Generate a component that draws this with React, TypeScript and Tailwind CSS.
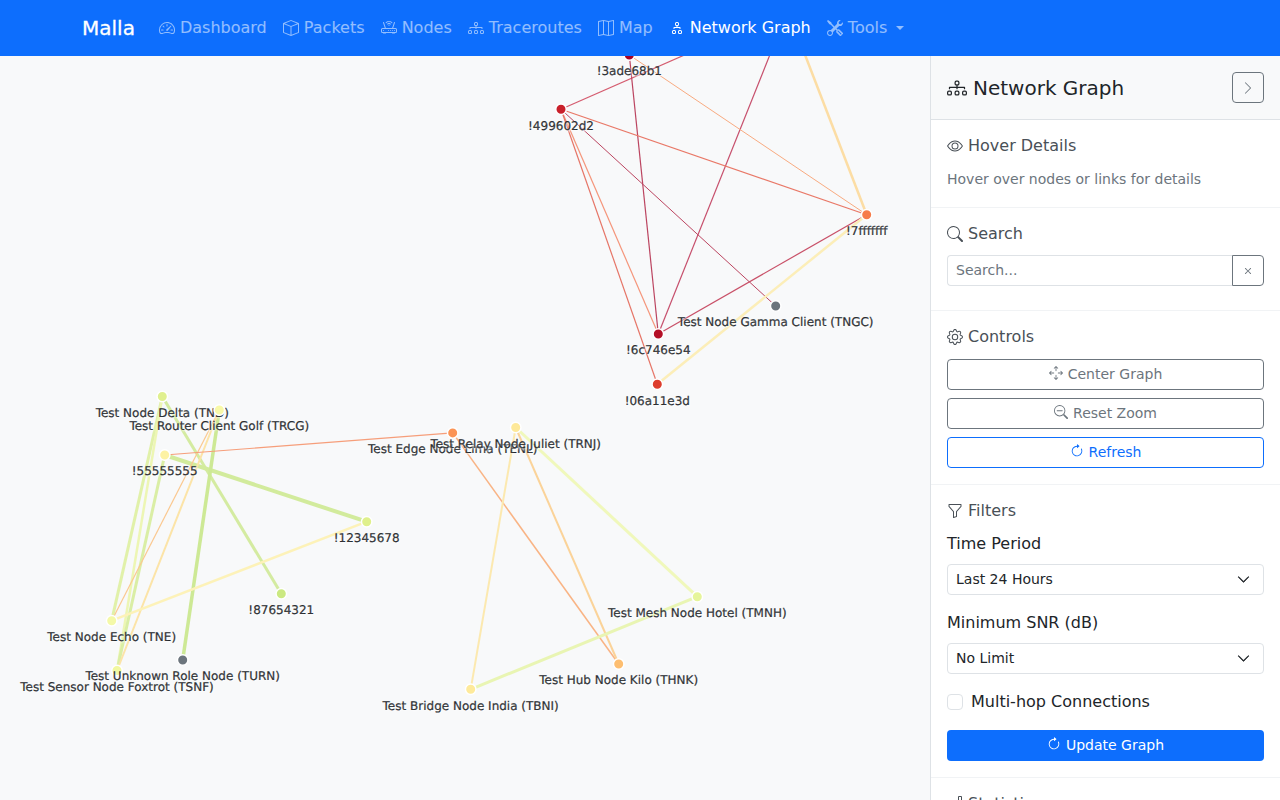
import React from 'react';
import {
  BsSpeedometer2,
  BsBox,
  BsRouter,
  BsDiagram2,
  BsDiagram3,
  BsMap,
  BsTools,
  BsEye,
  BsSearch,
  BsGear,
  BsArrowsMove,
  BsZoomOut,
  BsArrowClockwise,
  BsFunnel,
  BsChevronRight,
  BsChevronDown,
  BsX,
  BsBarChart,
} from 'react-icons/bs';

const nodes: Record<string, { x: number; y: number; color: string; label: string }> = {
  a: { x: 629.3, y: 55, color: '#a50026', label: '!3ade68b1' },
  b: { x: 561, y: 109.3, color: '#c9202a', label: '!499602d2' },
  c: { x: 866.7, y: 214.7, color: '#f67c4a', label: '!7fffffff' },
  d: { x: 658.3, y: 334, color: '#b40f26', label: '!6c746e54' },
  e: { x: 657.3, y: 384.3, color: '#dd3d2d', label: '!06a11e3d' },
  f: { x: 775.7, y: 306, color: '#6c757d', label: 'Test Node Gamma Client (TNGC)' },
  g: { x: 162.3, y: 396.5, color: '#e0f08f', label: 'Test Node Delta (TND)' },
  h: { x: 164.7, y: 455, color: '#fdf2a4', label: '!55555555' },
  i: { x: 366.7, y: 521.7, color: '#dff08c', label: '!12345678' },
  j: { x: 281.3, y: 593.7, color: '#cbe982', label: '!87654321' },
  k: { x: 111.7, y: 620.7, color: '#f4f9a8', label: 'Test Node Echo (TNE)' },
  l: { x: 117, y: 670.5, color: '#f2f8a0', label: 'Test Sensor Node Foxtrot (TSNF)' },
  m: { x: 182.7, y: 660, color: '#6c757d', label: 'Test Unknown Role Node (TURN)' },
  n: { x: 219.3, y: 410, color: '#f8f9a8', label: 'Test Router Client Golf (TRCG)' },
  o: { x: 452.7, y: 432.9, color: '#fb9455', label: 'Test Edge Node Lima (TENL)' },
  p: { x: 515.7, y: 427.5, color: '#fee999', label: 'Test Relay Node Juliet (TRNJ)' },
  q: { x: 697.3, y: 596.7, color: '#e6f59b', label: 'Test Mesh Node Hotel (TMNH)' },
  r: { x: 618.7, y: 664, color: '#fdbe70', label: 'Test Hub Node Kilo (THNK)' },
  s: { x: 470.7, y: 689.3, color: '#feea9b', label: 'Test Bridge Node India (TBNI)' },
};

const links: [string, string, string, number][] = [
  ['a', 'd', '#a50026', 1.2],
  ['a', 'c', '#f88d52', 1],
  ['b', 'c', '#e4472f', 1.2],
  ['b', 'd', '#f4704a', 1.2],
  ['b', 'e', '#e0432f', 1.2],
  ['b', 'f', '#a50026', 1],
  ['d', 'c', '#b71030', 1.2],
  ['e', 'c', '#feeaa0', 2.5],
  ['g', 'k', '#d9ef8b', 3],
  ['g', 'l', '#eaf59a', 2.5],
  ['h', 'l', '#cfeb85', 3],
  ['g', 'j', '#c7e77f', 3],
  ['h', 'i', '#c4e678', 4],
  ['n', 'm', '#bde36f', 3.5],
  ['n', 'k', '#fdb768', 1.2],
  ['n', 'l', '#fedc88', 2],
  ['h', 'o', '#f67c4a', 1.2],
  ['k', 'i', '#fff0a0', 2.5],
  ['o', 'r', '#fa9a58', 1.5],
  ['p', 'r', '#fdc574', 2],
  ['p', 's', '#fee393', 2],
  ['p', 'q', '#eef8a4', 3],
  ['q', 's', '#e4f498', 3],
];

// links whose far end sits behind the navbar
const clippedLinks: [number, number, number, number, string, number][] = [
  [561, 109.3, 689, 53, '#c8203a', 1.2],
  [658.3, 334, 773, 47, '#b40f36', 1.2],
  [866.7, 214.7, 802, 47, '#fed384', 2.5],
];

const navItems = [
  { label: 'Dashboard', icon: BsSpeedometer2 },
  { label: 'Packets', icon: BsBox },
  { label: 'Nodes', icon: BsRouter },
  { label: 'Traceroutes', icon: BsDiagram3 },
  { label: 'Map', icon: BsMap },
  { label: 'Network Graph', icon: BsDiagram2, active: true },
];

type IconType = React.ComponentType<{ size?: number; className?: string }>;

const SectionTitle = ({ icon: Icon, children, className = 'mb-3' }: { icon: IconType; children: React.ReactNode; className?: string }) => (
  <h6 className={`flex items-center text-base leading-[19.2px] font-normal text-[#495057] ${className}`}>
    <Icon size={16} className="mr-[5px] shrink-0" />
    {children}
  </h6>
);

const OutlineButton = ({ icon: Icon, children, blue }: { icon: IconType; children: React.ReactNode; blue?: boolean }) => (
  <button
    className={`h-[31px] w-full flex items-center justify-center rounded-[4px] border pb-px text-sm ${
      blue ? 'border-[#0d6efd] text-[#0d6efd]' : 'border-[#6c757d] text-[#6c757d]'
    }`}
  >
    <Icon size={14} className="mr-[5px] -translate-y-px" />
    {children}
  </button>
);

const SelectBox = ({ value }: { value: string }) => (
  <div className="h-[31px] flex items-center justify-between rounded-[4px] border border-[#dee2e6] pl-2 pr-[13px] text-sm text-[#212529]">
    <span>{value}</span>
    <BsChevronDown size={13} strokeWidth={0.8} />
  </div>
);

export default function App() {
  return (
    <div className="h-[800px] w-[1280px] overflow-hidden flex flex-col bg-white text-[#212529] font-['DejaVu_Sans',sans-serif]">
      <nav className="h-14 shrink-0 bg-[#0d6efd] flex items-center pl-[82px] relative z-10">
        <span className="text-xl text-white mr-4 [-webkit-text-stroke:0.3px_white]">Malla</span>
        {navItems.map((item) => (
          <a key={item.label} className={`flex items-center px-2 text-base ${item.active ? 'text-white' : 'text-white/55'}`}>
            <item.icon size={16} className="mr-[5.09px]" />
            {item.label}
          </a>
        ))}
        <a className="flex items-center px-2 text-base text-white/55">
          <BsTools size={16} className="mr-[5.09px]" />
          Tools
          <span className="ml-[9px] w-0 h-0 border-x-[4.8px] border-x-transparent border-t-[4.8px] border-t-white/55"></span>
        </a>
      </nav>

      <div className="flex flex-1 min-h-0">
        <main className="w-[930px] shrink-0 bg-[#f8f9fa]">
          <svg width="930" height="744" viewBox="0 56 930 744" className="block">
            <g opacity="0.72">
              {clippedLinks.map(([x1, y1, x2, y2, color, w], i) => (
                <line key={i} x1={x1} y1={y1} x2={x2} y2={y2} stroke={color} strokeWidth={w} />
              ))}
              {links.map(([from, to, color, w]) => (
                <line
                  key={from + to}
                  x1={nodes[from].x}
                  y1={nodes[from].y}
                  x2={nodes[to].x}
                  y2={nodes[to].y}
                  stroke={color}
                  strokeWidth={w}
                />
              ))}
            </g>
            {Object.entries(nodes).map(([id, node]) => (
              <g key={id}>
                <circle cx={node.x} cy={node.y} r={5.25} fill={node.color} stroke="#fff" strokeWidth={1.5} />
                <text
                  x={node.x}
                  y={node.y + 20.4}
                  textAnchor="middle"
                  className="text-xs fill-[#212529] stroke-[#212529] stroke-[0.2px] [text-rendering:geometricPrecision] [text-shadow:1px_1px_2px_rgba(255,255,255,0.8)]"
                >
                  {node.label}
                </text>
              </g>
            ))}
          </svg>
        </main>

        <aside className="w-[350px] shrink-0 border-l border-[#dee2e6] bg-white overflow-hidden">
          <div className="h-16 bg-[#f8f9fa] border-b border-[#dee2e6] flex items-center justify-between px-4">
            <h5 className="flex items-center text-xl text-[#212529]">
              <BsDiagram3 size={20} className="mr-[6px]" />
              Network Graph
            </h5>
            <button className="w-8 h-[31px] flex items-center justify-center rounded-[4px] border border-[#6c757d] text-[#6c757d]">
              <BsChevronRight size={14} />
            </button>
          </div>

          <section className="h-[88px] px-4 pt-4 border-b border-[#f1f3f5]">
            <SectionTitle icon={BsEye}>Hover Details</SectionTitle>
            <p className="text-sm leading-[21px] mt-[14px] text-[#6c757d]">Hover over nodes or links for details</p>
          </section>

          <section className="px-4 pt-4 pb-6 border-b border-[#f1f3f5]">
            <SectionTitle icon={BsSearch}>Search</SectionTitle>
            <div className="flex h-[31px]">
              <div className="flex-1 flex items-center rounded-l-[4px] border border-r-0 border-[#dee2e6] pl-2 pb-px text-sm text-[#6c757d]">
                Search...
              </div>
              <button className="w-8 flex items-center justify-center rounded-r-[4px] border border-[#6c757d] text-[#6c757d]">
                <BsX size={14} />
              </button>
            </div>
          </section>

          <section className="px-4 pt-4 pb-4 border-b border-[#f1f3f5]">
            <SectionTitle icon={BsGear} className="mb-[13px]">Controls</SectionTitle>
            <div className="flex flex-col gap-2">
              <OutlineButton icon={BsArrowsMove}>Center Graph</OutlineButton>
              <OutlineButton icon={BsZoomOut}>Reset Zoom</OutlineButton>
              <OutlineButton icon={BsArrowClockwise} blue>Refresh</OutlineButton>
            </div>
          </section>

          <section className="px-4 pt-4 pb-4 border-b border-[#f1f3f5]">
            <SectionTitle icon={BsFunnel} className="mb-[11px]">Filters</SectionTitle>
            <label className="block text-base leading-6 mb-2">Time Period</label>
            <div className="mb-4">
              <SelectBox value="Last 24 Hours" />
            </div>
            <label className="block text-base leading-6 mb-2">Minimum SNR (dB)</label>
            <div className="mb-4">
              <SelectBox value="No Limit" />
            </div>
            <div className="flex items-center h-6 mb-4">
              <span className="w-4 h-4 rounded-[4px] border border-[#dee2e6] bg-white mr-2"></span>
              <span className="text-base">Multi-hop Connections</span>
            </div>
            <button className="h-[31px] w-full flex items-center justify-center rounded-[4px] bg-[#0d6efd] text-sm text-white">
              <BsArrowClockwise size={14} className="mr-[5px] -translate-y-px" />
              Update Graph
            </button>
          </section>

          <section className="px-4 pt-4">
            <SectionTitle icon={BsBarChart}>Statistics</SectionTitle>
          </section>
        </aside>
      </div>
    </div>
  );
}
